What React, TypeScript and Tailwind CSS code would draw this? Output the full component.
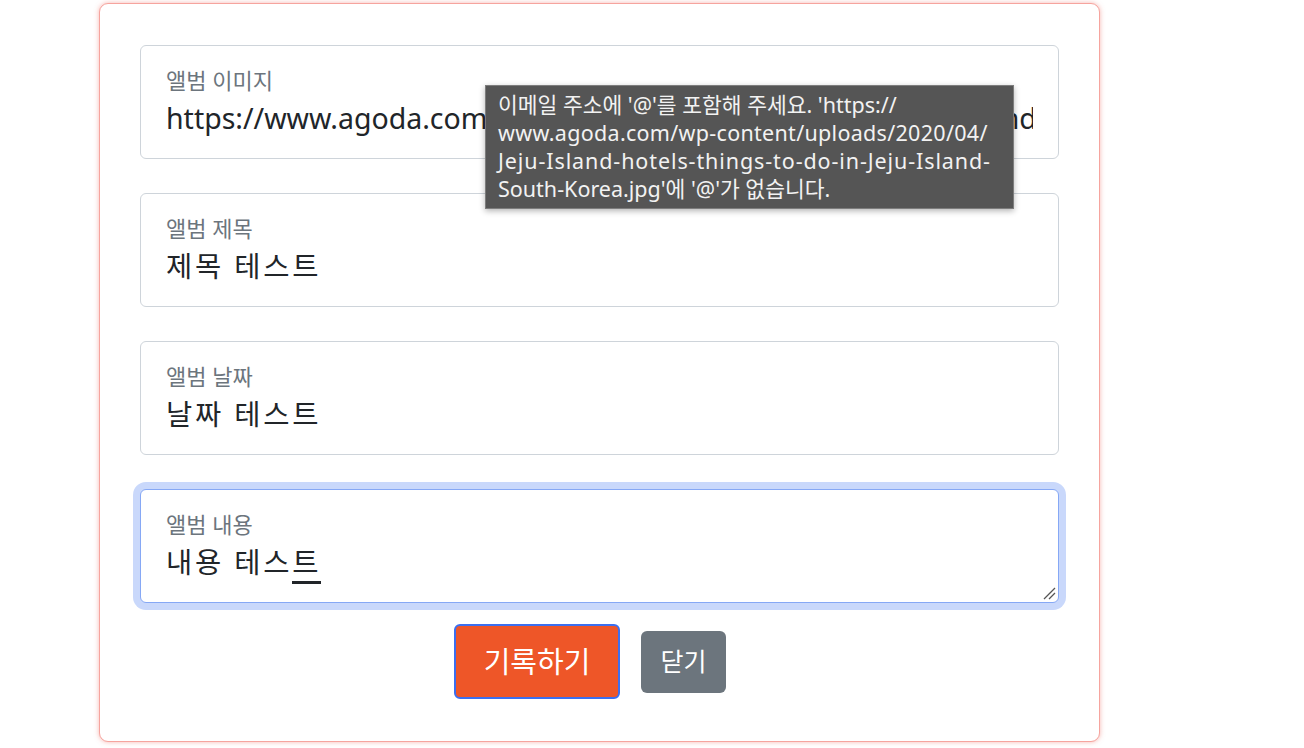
import React from "react";

const font = { fontFamily: '"Noto Sans", "Noto Sans CJK KR", sans-serif' };

function Field({ label, value, korean }: { label: string; value: string; korean?: boolean }) {
  return (
    <div className="h-[114px] w-full rounded-[6px] border border-[#ced4da] bg-white px-[25px] pt-[19px]">
      <label className="block text-[22px] leading-[30px] text-[#6c757d]">{label}</label>
      <input
        readOnly
        defaultValue={value}
        className={
          korean
            ? "mt-[4px] block w-full border-none bg-transparent p-0 text-[28.5px] leading-[38px] tracking-[2.8px] text-[#212529] outline-none"
            : "mt-[4px] block w-full border-none bg-transparent p-0 text-[28.5px] leading-[38px] text-[#212529] outline-none"
        }
        style={font}
      />
    </div>
  );
}

export default function App() {
  return (
    <div className="relative min-h-[748px] w-[1304px] bg-white" style={font}>
      <div className="ml-[99px] pt-[3px]">
        <div className="h-[739px] w-[1001px] rounded-[9px] border border-[#f6a49e] bg-white px-[40px] pt-[41px] shadow-[0_0_5px_rgba(240,110,100,0.5)]">
          <div className="flex flex-col gap-[34px]">
            <Field
              label="앨범 이미지"
              value="https://www.agoda.com/wp-content/uploads/2020/04/Jeju-Island-hotels-things-to-do-in-Jeju-Island-South-Korea.jpg"
            />
            <Field label="앨범 제목" value="제목 테스트" korean />
            <Field label="앨범 날짜" value="날짜 테스트" korean />

            {/* focused textarea */}
            <div className="relative h-[114px] w-full rounded-[6px] border-[1.5px] border-[#86a8f5] bg-white px-[25px] pt-[19px] shadow-[0_0_0_7px_#c9d8fb]">
              <label className="block text-[22px] leading-[30px] text-[#6c757d]">앨범 내용</label>
              <div className="mt-[4px] text-[28.5px] leading-[38px] tracking-[2.8px] text-[#212529]">
                내용 테스<span className="border-b-[3px] border-[#212529]">트</span>
              </div>
              <svg className="absolute bottom-[2px] right-[2px]" width="14" height="14" viewBox="0 0 14 14">
                <path d="M2 13L13 2M7 13L13 7" stroke="#555" strokeWidth="1.3" />
              </svg>
            </div>
          </div>

          <div className="mt-[21px] flex items-center justify-center gap-[21px] pr-[19px]">
            <button className="h-[75px] w-[166px] rounded-[6px] border-2 border-[#3b6ff0] bg-[#ee5628] text-[29px] text-white">
              기록하기
            </button>
            <button className="h-[62px] w-[85px] rounded-[6px] bg-[#6c757d] text-[25px] text-white">
              닫기
            </button>
          </div>
        </div>
      </div>

      {/* validation bubble */}
      <div className="absolute left-[485px] top-[85px] h-[124px] w-[529px] border border-[#7d7d7d] bg-[#555555] px-[12px] pt-[5px] text-[21.5px] leading-[28px] text-[#f2f2f2] shadow-[0_2px_6px_rgba(0,0,0,0.3)]">
        <div className="whitespace-nowrap">이메일 주소에 '@'를 포함해 주세요. 'https://</div>
        <div className="whitespace-nowrap tracking-[0.3px]">www.agoda.com/wp-content/uploads/2020/04/</div>
        <div className="whitespace-nowrap tracking-[0.9px]">Jeju-Island-hotels-things-to-do-in-Jeju-Island-</div>
        <div className="whitespace-nowrap">South-Korea.jpg'에 '@'가 없습니다.</div>
      </div>
    </div>
  );
}
